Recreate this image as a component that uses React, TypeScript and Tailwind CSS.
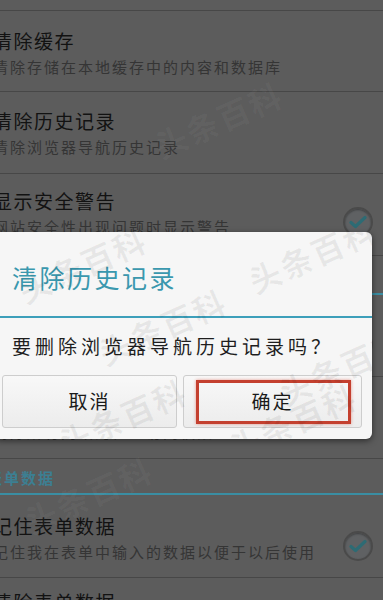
import React from "react";

const font = { fontFamily: '"Noto Sans CJK SC", "Noto Sans", sans-serif' };

const Check = () => (
  <div className="w-[30px] h-[30px] rounded-full border-2 border-[#4a4a4a] bg-[#5f6163] flex items-center justify-center shadow-[inset_0_1px_2px_rgba(0,0,0,0.35)]">
    <svg width="18" height="14" viewBox="0 0 18 14">
      <path d="M2 7.5 L6.5 11.5 L16 2.5" fill="none" stroke="#2d6b74" strokeWidth="3.2" strokeLinecap="round" strokeLinejoin="round" />
    </svg>
  </div>
);

interface RowProps {
  title: string;
  summary?: string;
  checked?: boolean;
  className?: string;
}

const Row: React.FC<RowProps> = ({ title, summary, checked, className = "" }) => (
  <div className={`flex justify-between border-b border-[#474747] pr-[10px] ${className}`}>
    <div className="ml-[-7px]">
      <div className="text-[19px] leading-[24px] tracking-[1.5px] text-[#121212]">{title}</div>
      {summary && (
        <div className="mt-[4px] text-[15px] leading-[20px] tracking-[2px] text-[#353535]">{summary}</div>
      )}
    </div>
    {checked && (
      <div className="self-center">
        <Check />
      </div>
    )}
  </div>
);

// faint "头条百科" stamp laid over the screenshot
const Watermark: React.FC<{ className?: string }> = ({ className = "" }) => (
  <div
    className={`absolute whitespace-nowrap pointer-events-none select-none text-[32px] font-bold tracking-[2px] rotate-[-24deg] ${className}`}
  >
    头条百科
  </div>
);

export default function App() {
  return (
    <div className="relative w-[383px] h-[600px] overflow-hidden bg-[#5c5c5c]" style={font}>
      <div className="h-[11px] border-b border-[#474747]" />
      <Row className="h-[81px] pt-[18px]" title="清除缓存" summary="清除存储在本地缓存中的内容和数据库" />
      <Row className="h-[82px] pt-[17px]" title="清除历史记录" summary="清除浏览器导航历史记录" />
      <Row className="h-[82px] pt-[15px]" title="显示安全警告" summary="网站安全性出现问题时显示警告" checked />
      <div className="h-[39px] border-b-2 border-[#3a8ea3] px-[10px] pt-[8px] text-[15px] font-bold text-[#3c7f92]">
        隐私设置
      </div>
      <Row className="h-[82px] pt-[17px]" title="启用位置信息" summary="允许网站请求访问您的位置信息" checked />
      <Row className="h-[82px] pt-[17px]" title="清除位置访问权限" summary="清除所有网站的位置访问权限" />
      <div className="h-[36px] border-b-2 border-[#3a8ea3] pt-[9px] text-[15px] leading-[20px] tracking-[2px] font-bold text-[#3c7f92]">
        <span className="ml-[-13px]">表单数据</span>
      </div>
      <Row className="h-[83px] pt-[19px]" title="记住表单数据" summary="记住我在表单中输入的数据以便于以后使用" checked />
      <Row className="h-[82px] pt-[12px]" title="清除表单数据" summary="清除所有保存的表单数据" />

      <Watermark className="left-[150px] top-[95px] text-white/[0.04]" />
      <Watermark className="left-[20px] top-[470px] text-white/[0.04]" />

      {/* dialog */}
      <div className="absolute left-[-6px] top-[232px] w-[378px] h-[207px] rounded-[6px] bg-[#f6f6f6] shadow-[0_2px_6px_rgba(0,0,0,0.5)] overflow-hidden">
        <div className="pl-[18px] pt-[30px] h-[84px] text-[25px] leading-[30px] tracking-[2.5px] text-[#3a98ae]">
          清除历史记录
        </div>
        <div className="h-[2px] bg-[#3d9fba]" />
        <div className="pl-[18px] mt-[15px] text-[19px] leading-[26px] tracking-[4px] text-[#1e1e1e]">
          要删除浏览器导航历史记录吗？
        </div>
        <div className="flex gap-[6px] pl-[8px] mt-[16px]">
          <button className="w-[175px] h-[53px] rounded-[3px] border border-[#cdcdcd] bg-gradient-to-b from-[#f8f8f8] to-[#ececec] text-[19px] tracking-[2px] text-[#1a1a1a]">
            取消
          </button>
          <button className="relative w-[179px] h-[53px] rounded-[3px] border border-[#cdcdcd] bg-gradient-to-b from-[#f8f8f8] to-[#ececec] text-[19px] tracking-[2px] text-[#1a1a1a]">
            确定
            <span className="absolute left-[12px] right-[10px] top-[4px] bottom-[3px] border-[3px] border-[#c4402f] shadow-[0_0_3px_rgba(220,90,70,0.6)]" />
          </button>
        </div>
        <Watermark className="left-[20px] top-[8px] text-black/[0.06]" />
        <Watermark className="left-[250px] top-[-2px] text-black/[0.06]" />
        <Watermark className="left-[100px] top-[70px] text-black/[0.06]" />
        <Watermark className="left-[280px] top-[110px] text-black/[0.06]" />
        <Watermark className="left-[60px] top-[160px] text-black/[0.06]" />
        <Watermark className="left-[230px] top-[165px] text-black/[0.06]" />
      </div>
    </div>
  );
}
